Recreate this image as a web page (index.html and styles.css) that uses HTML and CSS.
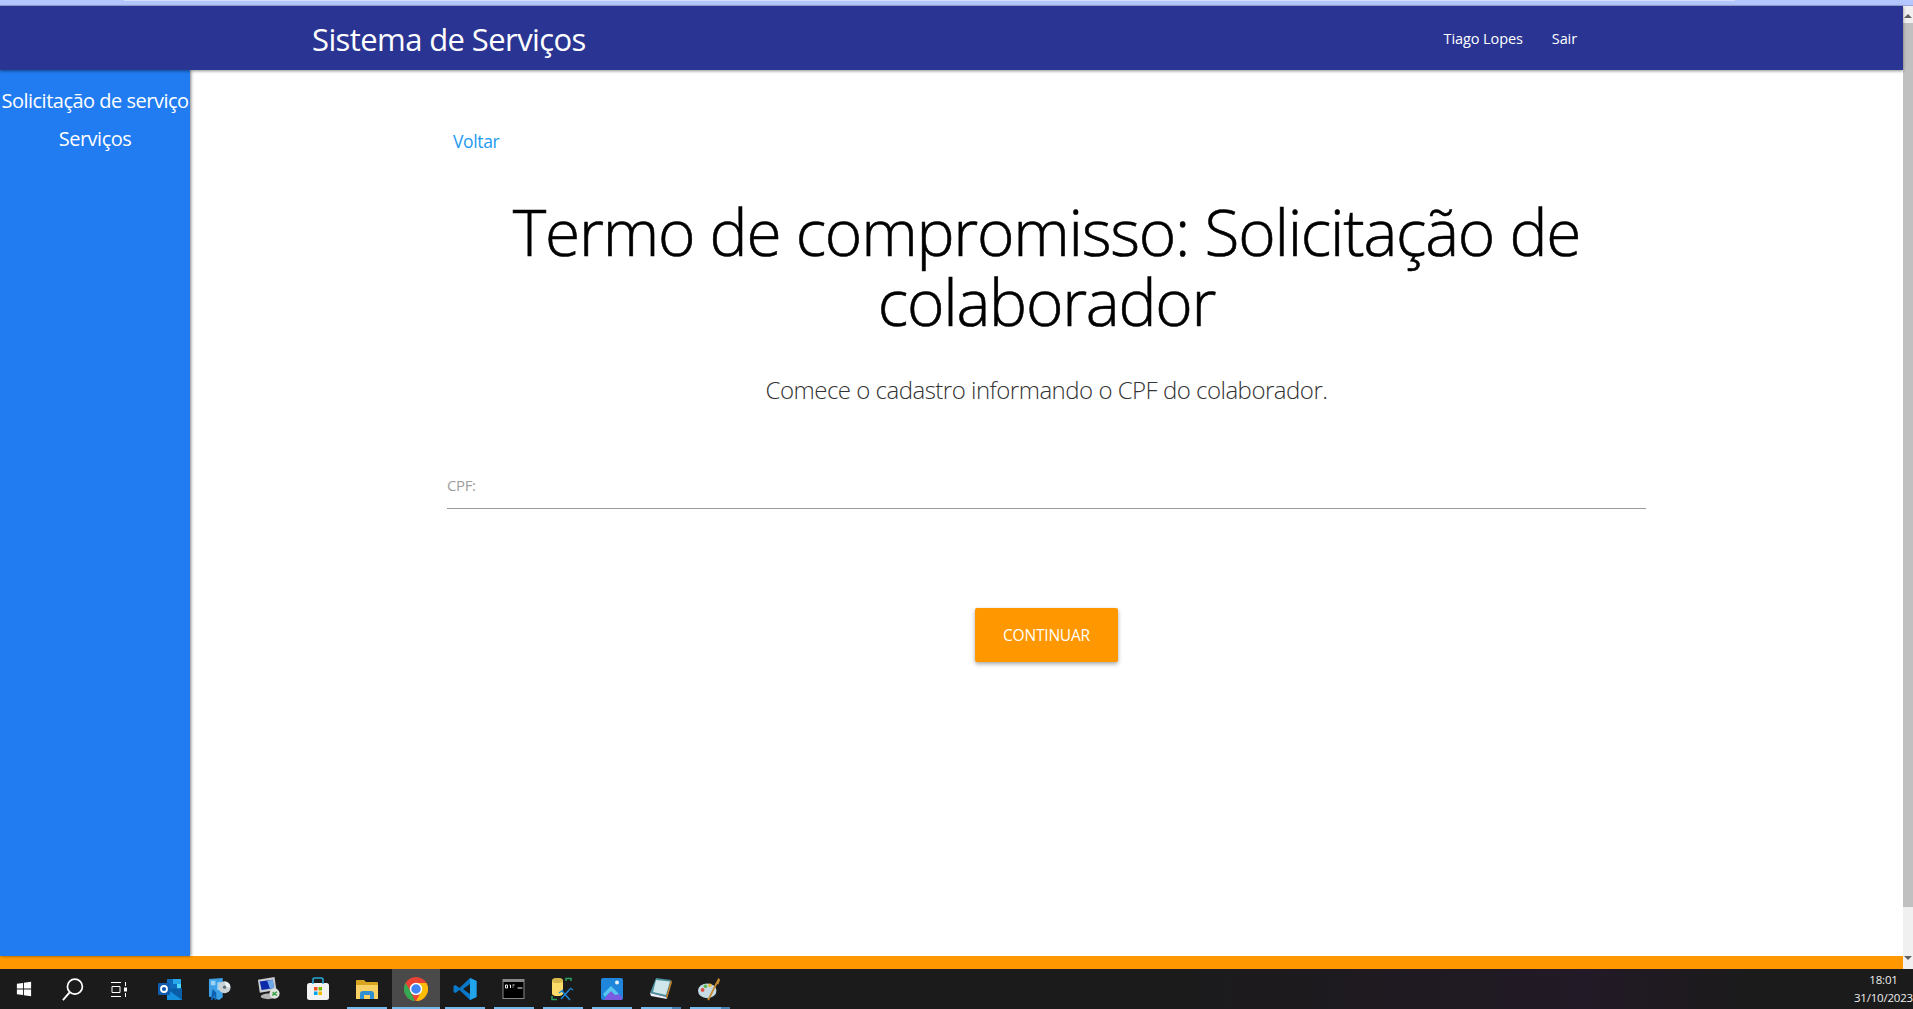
FILE: index.html
```html
<!DOCTYPE html>
<html>
   <head>
      <meta name="viewport" content="width=device-width, initial-scale=1.0"/>
      <title>Sistema de Serviços</title>
      <link rel="stylesheet" href="styles.css">
   </head>
   <body>
      <div class="tabstrip"><div class="tabstrip-fill"></div></div>
      <div class="window">
         <div class="page">
            <!--top bar-->
            <div class="header">
               <div class="brand">Sistema de Serviços</div>
               <div class="header-links">
                  <a href="#">Tiago Lopes</a>
                  <a href="#">Sair</a>
               </div>
            </div>
            <div class="middle">
               <!--side menu-->
               <div class="sidebar">
                  <a href="#">Solicitação de serviço</a>
                  <a href="#">Serviços</a>
               </div>
               <div class="content">
                  <div class="form-box">
                     <a class="back" href="#">Voltar</a>
                     <h1>Termo de compromisso: Solicitação de colaborador</h1>
                     <p class="lead">Comece o cadastro informando o CPF do colaborador.</p>
                     <div class="field"><label>CPF:</label></div>
                     <div class="actions"><button>CONTINUAR</button></div>
                  </div>
               </div>
            </div>
            <div class="footer"></div>
         </div>
         <div class="scrollbar">
            <div class="arrow-up"></div>
            <div class="thumb"></div>
            <div class="arrow-down"></div>
         </div>
      </div>
      <!--windows taskbar-->
      <div class="taskbar">
         <div class="task">
            <svg width="16" height="16" viewBox="0 0 18 18"><path fill="#fff" d="M1 3.2 7.9 2.2V8.5H1ZM8.9 2 17 .9V8.5H8.9ZM1 9.5H7.9V15.8L1 14.8ZM8.9 9.5H17V17.1L8.9 16Z"/></svg>
         </div>
         <div class="task">
            <svg width="23" height="23" viewBox="0 0 24 24"><circle cx="14.5" cy="9" r="7.8" fill="none" stroke="#fff" stroke-width="1.8"/><path stroke="#fff" stroke-width="2" d="M9 15 2 23"/></svg>
         </div>
         <div class="task">
            <svg class="taskview" width="16" height="15" viewBox="0 0 16 15"><g fill="none" stroke="#fff" stroke-width="1"><path d="M0 .5H10M0 14.5H10M1 4.5H9V10.5H1ZM14.5 0V4M14.5 11V15"/></g><path fill="#fff" d="M13 5.500H16V9.500H13Z"/></svg>
         </div>
         <div class="task">
            <svg width="25" height="22" viewBox="0 0 25 22"><path fill="#0f6cbd" d="M9 1H23V11L16 14 9 11Z"/><path fill="#28a8ea" d="M15 1H23V6H15Z"/><path fill="#50d9ff" d="M19 6H23V11H19Z"/><path fill="#0a5ea8" d="M9 11 24 10V22H9Z"/><path fill="#1490df" d="M9 11 24 22H9Z"/><rect x="0" y="5" width="12" height="12" rx="1" fill="#0f5cad"/><circle cx="6" cy="11" r="3" fill="none" stroke="#fff" stroke-width="1.8"/></svg>
         </div>
         <div class="task">
            <svg width="24" height="23" viewBox="0 0 26 25"><path fill="#3ba0e6" d="M1 1 16 0V21L12 24 1 20Z"/><path fill="#9cd3f5" d="M3 3H8V8H3ZM10 5 14 4V13H10Z"/><path fill="#0f5fb0" d="M5 12 9 16V24H7V18L5 24H3Z"/><circle cx="18" cy="10" r="6.5" fill="#c9d2d6"/><circle cx="18" cy="10" r="1.8" fill="#5d6b73"/><path fill="#eef3f5" d="M18 4A6 6 0 0 1 24 10H20Z"/></svg>
         </div>
         <div class="task">
            <svg width="24" height="24" viewBox="0 0 26 26"><path fill="#c8ccd0" d="M1 3 19 0 21 14 3 17Z"/><path fill="#0d2aa8" d="M3 5 17 3 18.5 12 5 14Z"/><path fill="#6fa8e8" d="M11 4 17 3 18.5 12 14 12.5Z"/><ellipse cx="12" cy="21" rx="8" ry="3" fill="#b5b5b5"/><circle cx="19" cy="18" r="5.5" fill="#dfe4df"/><path stroke="#2f9e3c" stroke-width="1.5" d="M16.5 20 21.5 16M17 16.5 19 18.5M19 18 21.5 20"/></svg>
         </div>
         <div class="task">
            <svg width="24" height="24" viewBox="0 0 24 24"><rect x="1" y="6" width="22" height="17" rx="2.5" fill="#f3f3f3"/><path fill="none" stroke="#2aa9d8" stroke-width="1.5" d="M7 7V2.5Q7 1 9 1H15Q17 1 17 2.5V7"/><path fill="#f25022" d="M8 10H11.5V13.5H8Z"/><path fill="#7fba00" d="M12.5 10H16V13.5H12.5Z"/><path fill="#00a4ef" d="M8 14.5H11.5V18H8Z"/><path fill="#ffb900" d="M12.5 14.5H16V18H12.5Z"/></svg>
         </div>
         <div class="task running">
            <svg width="22" height="19" viewBox="0 0 22 19"><path fill="#d9a520" d="M0 1Q0 0 1 0H8L10 2H21Q22 2 22 3V8H0Z"/><path fill="#fad165" d="M0 5H22V19H0Z"/><path fill="#2f8fd3" d="M4 19V14Q4 11 7 11H15Q18 11 18 14V19H14V15H8V19Z"/></svg>
         </div>
         <div class="task running active">
            <svg width="24" height="24" viewBox="0 0 24 24"><circle cx="12" cy="12" r="12" fill="#ea4335"/><path fill="#34a853" d="M12 24A12 12 0 0 1 1.6 6L7 15.5 11 24Z"/><path fill="#fbbc05" d="M12 24A12 12 0 0 0 22.4 6H12L17 15Z"/><circle cx="12" cy="12" r="5.5" fill="#4285f4" stroke="#fff" stroke-width="1.5"/></svg>
         </div>
         <div class="task running">
            <svg width="24" height="24" viewBox="0 0 24 24"><path fill="#0a78c8" d="M17 1 6.5 11 2.5 8 .5 9V15L2.5 16 6.5 13 17 23 23.5 20V4ZM17 7V17L10 12Z"/><path fill="#22a4ea" d="M17 1 23.5 4V20L17 23Z"/></svg>
         </div>
         <div class="task running">
            <svg width="23" height="20" viewBox="0 0 22 20"><rect x="0" y="0" width="22" height="20" fill="#8a8a8a"/><rect x="1" y="3" width="20" height="16" fill="#000"/><path stroke="#eee" stroke-width="1" fill="none" d="M3 6H5V9H3ZM7 6H8V9M10 6H12M10 8H11M15 9H20"/></svg>
         </div>
         <div class="task running">
            <svg width="24" height="24" viewBox="0 0 24 24"><path fill="#fbdc6a" d="M1 4Q1 1 6.5 1T12 4V17Q12 18 9 19H4Q1 18 1 17Z"/><path fill="#d8b84a" d="M1 4Q1 1 6.5 1T12 4Q12 6 6.5 6T1 4Z"/><g fill="none" stroke-width="1.5"><path stroke="#2aa060" d="M15 4V1.5H20V4M1 19V22.5H6"/><path stroke="#1e88d8" d="M10 22 19 12M11 14 19 23M19 11 22 13M8 16 12 13"/></g></svg>
         </div>
         <div class="task running">
            <svg width="22" height="22" viewBox="0 0 22 22"><rect x="0" y="0" width="22" height="22" rx="2" fill="#1f86dc"/><circle cx="16" cy="4.5" r="2" fill="#e8f2ff"/><path fill="#7b5ce0" d="M3 22 11 9 21 19V22Z"/><path fill="#55c8f0" d="M2 16 10 8 18 16 14 17 10 13 4 19Z"/></svg>
         </div>
         <div class="task running split">
            <svg width="24" height="24" viewBox="0 0 24 24"><path fill="#4a8f99" d="M7 1 22 3 17 20 1 16Z"/><path fill="#cfe6ea" d="M7 3 21 4.5 17 18 4 15Z"/><path fill="#c98a30" d="M22 3 23 5 18 22 17 20Z"/><path fill="#eef" d="M1 16 17 20 18 22 2 19Z"/></svg>
         </div>
         <div class="task running split">
            <svg width="24" height="24" viewBox="0 0 26 24"><ellipse cx="10" cy="14" rx="10" ry="8" fill="#c4dbe6"/><circle cx="5" cy="13" r="2" fill="#e14b3a"/><circle cx="8" cy="9" r="2" fill="#5db84e"/><circle cx="13" cy="8" r="2" fill="#e8b93a"/><path stroke="#c98a30" stroke-width="2" d="M11 24 20 6"/><path fill="#c98a30" d="M19 6 22 0 24 2 22 7Z"/></svg>
         </div>
         <div class="tray">
            <div>18:01</div>
            <div>31/10/2023</div>
         </div>
      </div>
   </body>
</html>
```

FILE: styles.css
```css
html, body {
margin: 0;
height: 100%;
overflow: hidden;
}
body {
display: flex;
flex-direction: column;
font-family: "Open Sans", "Noto Sans", sans-serif;
background: #fff;
}
a {
text-decoration: none;
}
.tabstrip {
height: 6px;
background: #b5c7ff;
border-bottom: 1px solid #9aa8d8;
box-sizing: border-box;
}
.tabstrip-fill {
height: 1px;
width: 1611px;
margin-left: 124px;
background: #d5dffc;
}
.window {
flex: 1;
display: flex;
min-height: 0;
}
.page {
flex: 1;
display: flex;
flex-direction: column;
min-width: 0;
}
.header {
height: 64px;
background: #2a3593;
box-shadow: 0 1px 3px rgba(0,0,0,.45);
display: flex;
align-items: center;
justify-content: space-between;
padding: 0 326px 0 312px;
color: #fff;
position: relative;
z-index: 2;
}
.brand {
font-size: 31px;
font-weight: 400;
letter-spacing: -.6px;
padding-top: 2px;
}
.header-links {
display: flex;
gap: 29px;
}
.header-links a {
color: #fff;
font-size: 14.5px;
letter-spacing: -.1px;
}
.middle {
flex: 1;
display: flex;
min-height: 0;
}
.sidebar {
width: 190px;
background: #207cf0;
box-shadow: 1px 0 3px rgba(0,0,0,.5);
display: flex;
flex-direction: column;
align-items: center;
padding-top: 19px;
gap: 15px;
position: relative;
z-index: 1;
}
.sidebar a {
color: #fff;
font-size: 20px;
line-height: 23px;
letter-spacing: -.5px;
white-space: nowrap;
}
.content {
flex: 1;
display: flex;
justify-content: center;
}
.form-box {
width: 1199px;
display: flex;
flex-direction: column;
padding-top: 60px;
}
.back {
color: #1e9af0;
font-size: 17.5px;
line-height: 22px;
letter-spacing: -.35px;
margin-left: 6px;
}
h1 {
margin: 45px 0 0;
font-size: 64px;
line-height: 70px;
font-weight: 300;
text-align: center;
color: #000;
letter-spacing: -1.25px;
-webkit-text-stroke: .6px #000;
}
.lead {
margin: 35px 0 0;
font-size: 24px;
line-height: 36px;
font-weight: 300;
text-align: center;
color: #333;
letter-spacing: -.5px;
}
.field {
margin-top: 55px;
height: 46px;
border-bottom: 1px solid #9a9a9a;
box-sizing: border-box;
padding-top: 11px;
}
.field label {
color: #9e9e9e;
font-size: 15px;
letter-spacing: -.4px;
}
.actions {
display: flex;
justify-content: center;
margin-top: 99px;
}
button {
width: 143px;
height: 54px;
border: 0;
border-radius: 2px;
background: #ff9800;
color: #fff;
font-family: inherit;
font-size: 15.5px;
letter-spacing: -.2px;
box-shadow: 0 2px 4px rgba(0,0,0,.35);
}
.footer {
height: 13px;
background: #ff9800;
}
.scrollbar {
width: 10px;
background: #f0f0f0;
display: flex;
flex-direction: column;
align-items: center;
}
.arrow-up, .arrow-down {
width: 0;
height: 0;
border-left: 4px solid transparent;
border-right: 4px solid transparent;
}
.arrow-up {
border-bottom: 4px solid #606060;
margin: 8px 0 5px;
}
.arrow-down {
border-top: 4px solid #606060;
margin: 5px 0 6px;
}
.thumb {
width: 100%;
height: 884px;
background: #c0c0c0;
margin-bottom: 44px;
}
.taskbar {
height: 40px;
background: linear-gradient(90deg, #1b1b1b 60%, #221a26 83%, #1b1b1b 92%);
display: flex;
align-items: center;
color: #fff;
padding-left: 0;
}
.task {
width: 49px;
height: 40px;
display: flex;
align-items: center;
justify-content: center;
flex: none;
position: relative;
}
.task:first-child {
margin-left: -1px;
}
.taskview {
margin-right: 5px;
}
.task.running::after {
content: "";
position: absolute;
left: 5px;
right: 4px;
bottom: 0;
height: 2px;
background: #76b9ed;
}
.task.active {
background: #4a4a4a;
width: 48px;
margin-left: 1px;
}
.task.active svg {
margin-right: 1px;
}
.task.active::after {
left: 0;
right: 0;
}
.task.split::after {
background: linear-gradient(90deg, #76b9ed 78%, #4a80ad 78%);
}
.tray {
margin-left: auto;
font-size: 11.5px;
line-height: 18px;
text-align: center;
letter-spacing: -.2px;
white-space: nowrap;
color: #eee;
}
```
